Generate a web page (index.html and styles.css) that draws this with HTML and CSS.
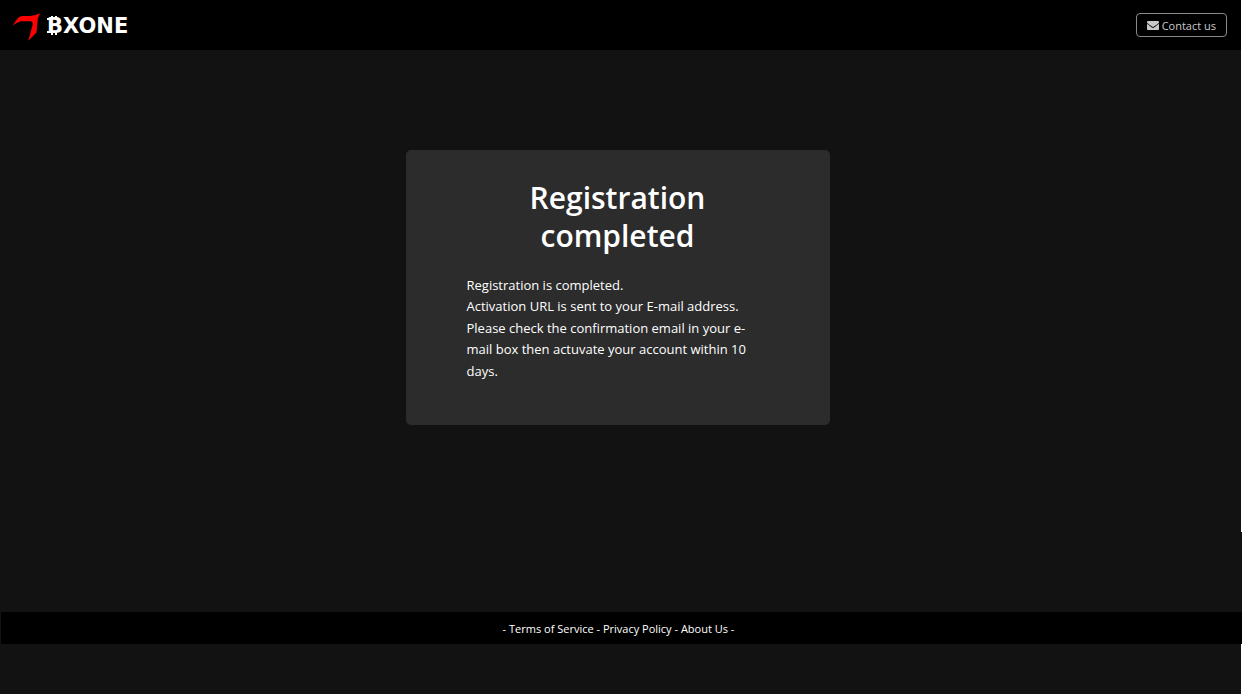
FILE: index.html
```html
<!DOCTYPE html>
<html lang="en">
<head>
<meta charset="utf-8">
<meta name="viewport" content="width=device-width, initial-scale=1">
<title>BXONE</title>
<link rel="stylesheet" href="styles.css">
</head>
<body>
<div class="page">
  <header class="header">
    <a class="logo" href="#">
      <svg class="logo-svg" viewBox="0 0 120 32" width="120" height="32" role="img" aria-label="BXONE">
        <path fill="#ff0000" d="M-.5 16.500 4.500 9.500Q6.500 7 9 7H17Q22 7 27 4.300L24.800 9.500 23.500 23.500 15.300 31.800 19.700 15.500Q20.200 12.500 17.500 12.300H8Q3.500 13.500-.5 16.500Z"/>
        <text class="logo-text" x="34" y="24">BXONE</text>
        <path fill="#fff" d="M38 7h2v4h-2zM42 7h2v4h-2zM38 22h2v4h-2zM42 22h2v4h-2zM34 9h4v2h-4zM34 22h4v2h-4z"/>
      </svg>
    </a>
    <button class="contact" type="button">
      <svg class="mail" viewBox="0 0 512 384" width="12" height="9" aria-hidden="true">
        <path fill="currentColor" d="M502 127c4-3 10 0 10 5v204c0 27-21 48-48 48H48c-27 0-48-21-48-48V132c0-5 6-8 10-5 22 17 52 39 154 114 21 15 57 48 92 47 35 1 72-32 92-47 102-75 132-97 154-114zM256 256c23 0 57-29 73-41 133-96 143-105 174-129 6-4 9-11 9-19V48c0-27-21-48-48-48H48C21 0 0 21 0 48v19c0 8 3 15 9 19 31 24 41 33 174 129 16 12 50 41 73 41z"/>
      </svg>
      <span>Contact us</span>
    </button>
  </header>
  <main class="main">
    <section class="card">
      <h1 class="title">Registration completed</h1>
      <p class="message">Registration is completed.<br>Activation URL is sent to your E-mail address.<br>Please check the confirmation email in your e-mail box then actuvate your account within 10 days.</p>
    </section>
  </main>
  <footer class="footer-area">
    <nav class="footer">- <a href="#">Terms of Service</a> - <a href="#">Privacy Policy</a> - <a href="#">About Us</a> -</nav>
  </footer>
</div>
</body>
</html>
```
FILE: styles.css
```css
* { box-sizing: border-box; }

html { background: #fff; }

body {
  margin: 0;
  color: #fff;
  font-family: "Segoe UI", "Open Sans", sans-serif;
}

.page {
  display: flex;
  flex-direction: column;
  min-height: 100vh;
  margin-right: 1px;
  padding-bottom: 50px;
  background: #121212;
}

.header {
  display: flex;
  align-items: center;
  justify-content: space-between;
  height: 50px;
  padding: 0 14px 0 13px;
  background: #000;
}

.logo { display: block; height: 32px; }

.logo-svg { display: block; overflow: visible; }

.logo-text {
  fill: #fff;
  font-family: "DejaVu Sans", sans-serif;
  font-size: 21px;
  font-weight: 700;
}

.contact {
  display: flex;
  align-items: center;
  gap: 3px;
  height: 24px;
  padding: 0 10px;
  border: 1px solid #8a8a8a;
  border-radius: 4px;
  background: transparent;
  color: #c8c8c8;
  font-family: inherit;
  font-size: 11px;
  white-space: nowrap;
}

.main {
  flex: 1;
  padding: 100px 6px 80px 0;
}

.card {
  max-width: 424px;
  margin: 0 auto;
  padding: 29px 61px 43px;
  border-radius: 5px;
  background: #2c2c2c;
}

.title {
  margin: 0 0 20px;
  font-size: 30px;
  font-weight: 600;
  line-height: 38px;
  text-align: center;
}

.message {
  margin: 0;
  font-size: 13px;
  line-height: 1.65;
}

.footer-area {
  margin-right: -1px;
  padding: 80px 0 0 1px;
  background: #121212;
}

.footer {
  padding: 1px 6px 0 0;
  background: #000;
  font-size: 11px;
  line-height: 31px;
  text-align: center;
}

.footer a { color: inherit; text-decoration: none; }
```
